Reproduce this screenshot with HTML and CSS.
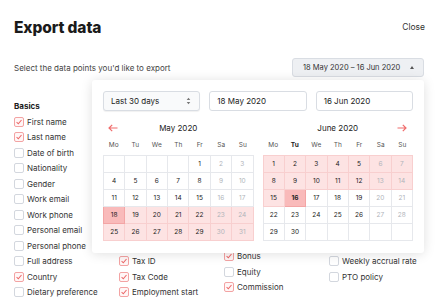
FILE: index.html
```html
<!DOCTYPE html>
<html lang="en">
<head>
    <meta charset="UTF-8">
    <meta name="viewport" content="width=device-width, initial-scale=1.0">
    <title>Export data</title>
    <link rel="stylesheet" href="styles.css">
</head>
<body>
    <div class="page-header">
        <h1 class="page-title">Export data</h1>
        <a class="close-link" href="#">Close</a>
    </div>

    <div class="toolbar">
        <p class="toolbar-hint">Select the data points you'd like to export</p>
        <div class="range-picker">
            <button class="range-btn" type="button">
                <span>18 May 2020 – 16 Jun 2020</span>
                <span class="caret-up"></span>
            </button>

            <div class="popover">
                <div class="popover-fields">
                    <div class="field field-select">
                        <span>Last 30 days</span>
                        <svg class="updown" width="5" height="8" viewBox="0 0 5 8"><path d="M2.5 0.8 L4.3 3 L0.7 3 Z M2.5 7.2 L4.3 5 L0.7 5 Z" fill="#777"/></svg>
                    </div>
                    <div class="field">18 May 2020</div>
                    <div class="field">16 Jun 2020</div>
                </div>

                <div class="months">
                    <div class="month">
                        <div class="month-head">
                            <svg class="nav-arrow nav-prev" width="10" height="8" viewBox="0 0 10 8"><path d="M9.5 4 H1 M4.2 0.8 L1 4 L4.2 7.2" fill="none" stroke="#f06c6c" stroke-width="1.2"/></svg>
                            <span>May 2020</span>
                        </div>
                        <div class="weekdays"><span>Mo</span><span>Tu</span><span>We</span><span>Th</span><span>Fr</span><span>Sa</span><span>Su</span></div>
                        <table class="days">
                            <tr><td></td><td></td><td></td><td></td><td>1</td><td class="wknd">2</td><td class="wknd">3</td></tr>
                            <tr><td>4</td><td>5</td><td>6</td><td>7</td><td>8</td><td class="wknd">9</td><td class="wknd">10</td></tr>
                            <tr><td>11</td><td>12</td><td>13</td><td>14</td><td>15</td><td class="wknd">16</td><td class="wknd">17</td></tr>
                            <tr class="in-range"><td class="edge">18</td><td>19</td><td>20</td><td>21</td><td>22</td><td class="wknd">23</td><td class="wknd">24</td></tr>
                            <tr class="in-range"><td>25</td><td>26</td><td>27</td><td>28</td><td>29</td><td class="wknd">30</td><td class="wknd">31</td></tr>
                        </table>
                    </div>

                    <div class="month">
                        <div class="month-head">
                            <span>June 2020</span>
                            <svg class="nav-arrow nav-next" width="10" height="8" viewBox="0 0 10 8"><path d="M0.5 4 H9 M5.8 0.8 L9 4 L5.8 7.2" fill="none" stroke="#f06c6c" stroke-width="1.2"/></svg>
                        </div>
                        <div class="weekdays"><span>Mo</span><span class="today">Tu</span><span>We</span><span>Th</span><span>Fr</span><span>Sa</span><span>Su</span></div>
                        <table class="days">
                            <tr class="in-range"><td>1</td><td>2</td><td>3</td><td>4</td><td>5</td><td class="wknd">6</td><td class="wknd">7</td></tr>
                            <tr class="in-range"><td>8</td><td>9</td><td>10</td><td>11</td><td>12</td><td class="wknd">13</td><td class="wknd">14</td></tr>
                            <tr><td class="pink">15</td><td class="pink edge today">16</td><td>17</td><td>18</td><td>19</td><td class="wknd">20</td><td class="wknd">21</td></tr>
                            <tr><td>22</td><td>23</td><td>24</td><td>25</td><td>26</td><td class="wknd">27</td><td class="wknd">28</td></tr>
                            <tr><td>29</td><td>30</td><td></td><td></td><td></td><td></td><td></td></tr>
                        </table>
                    </div>
                </div>
            </div>
        </div>
    </div>

    <div class="fields">
        <div class="field-group">
            <div class="group-title">Basics</div>
            <label class="check"><span class="box on"></span>First name</label>
            <label class="check"><span class="box on"></span>Last name</label>
            <label class="check"><span class="box"></span>Date of birth</label>
            <label class="check"><span class="box"></span>Nationality</label>
            <label class="check"><span class="box"></span>Gender</label>
            <label class="check"><span class="box"></span>Work email</label>
            <label class="check"><span class="box"></span>Work phone</label>
            <label class="check"><span class="box"></span>Personal email</label>
            <label class="check"><span class="box"></span>Personal phone</label>
            <label class="check"><span class="box"></span>Full address</label>
            <label class="check"><span class="box on"></span>Country</label>
            <label class="check"><span class="box"></span>Dietary preference</label>
        </div>
        <div class="field-group">
            <div class="group-title">Employment</div>
            <label class="check"><span class="box on"></span>Job title</label>
            <label class="check"><span class="box"></span>Department</label>
            <label class="check"><span class="box"></span>Manager</label>
            <label class="check"><span class="box"></span>Location</label>
            <label class="check"><span class="box"></span>Employee ID</label>
            <label class="check"><span class="box"></span>Contract type</label>
            <label class="check"><span class="box"></span>Hours</label>
            <label class="check"><span class="box"></span>Probation end</label>
            <label class="check"><span class="box"></span>Bank details</label>
            <label class="check"><span class="box on"></span>Tax ID</label>
            <label class="check"><span class="box on"></span>Tax Code</label>
            <label class="check"><span class="box on"></span>Employment start</label>
        </div>
        <div class="field-group group-shifted">
            <div class="group-title">Compensation</div>
            <label class="check"><span class="box on"></span>Salary</label>
            <label class="check"><span class="box"></span>Currency</label>
            <label class="check"><span class="box"></span>Pay frequency</label>
            <label class="check"><span class="box"></span>Pay grade</label>
            <label class="check"><span class="box"></span>Last raise</label>
            <label class="check"><span class="box"></span>Allowances</label>
            <label class="check"><span class="box"></span>Pension</label>
            <label class="check"><span class="box"></span>Benefits</label>
            <label class="check"><span class="box"></span>Overtime</label>
            <label class="check"><span class="box on"></span>Bonus</label>
            <label class="check"><span class="box"></span>Equity</label>
            <label class="check"><span class="box on"></span>Commission</label>
        </div>
        <div class="field-group">
            <div class="group-title">Time off</div>
            <label class="check"><span class="box"></span>Allowance</label>
            <label class="check"><span class="box"></span>Days taken</label>
            <label class="check"><span class="box"></span>Days remaining</label>
            <label class="check"><span class="box"></span>Carry over</label>
            <label class="check"><span class="box"></span>Sick days</label>
            <label class="check"><span class="box"></span>Parental leave</label>
            <label class="check"><span class="box"></span>Unpaid leave</label>
            <label class="check"><span class="box"></span>Public holidays</label>
            <label class="check"><span class="box"></span>Accrual start</label>
            <label class="check"><span class="box"></span>Weekly accrual rate</label>
            <label class="check"><span class="box"></span>PTO policy</label>
        </div>
    </div>
</body>
</html>
```

FILE: styles.css
```css
body {
    font-family: Inter, "Noto Sans", sans-serif;
    font-size: 8px;
    color: #333;
    background-color: #fff;
    margin: 0;
    padding: 16px 6px 0 14px;
    overflow: hidden;
}
.page-header {
    display: flex;
    justify-content: space-between;
    align-items: center;
    height: 22px;
    padding-right: 9px;
}
.page-title {
    font-size: 15.5px;
    font-weight: 800;
    color: #1b1b1b;
    margin: 0;
    letter-spacing: -0.1px;
}
.close-link {
    color: #333;
    text-decoration: none;
    font-size: 8.5px;
}
.toolbar {
    display: flex;
    justify-content: space-between;
    align-items: center;
    margin-top: 20px;
    padding-right: 10px;
}
.toolbar-hint {
    margin: 0;
    color: #444;
}
.range-picker {
    position: relative;
}
.range-btn {
    display: flex;
    align-items: center;
    justify-content: space-between;
    width: 132px;
    height: 19px;
    padding: 0 9px 0 10px;
    font-family: inherit;
    font-size: 7.5px;
    color: #333;
    white-space: nowrap;
    background-color: #eef0f3;
    border: 1px solid #d9dde3;
    border-radius: 3px;
}
.caret-up {
    width: 0;
    height: 0;
    border-left: 2.5px solid transparent;
    border-right: 2.5px solid transparent;
    border-bottom: 3px solid #555;
}
.popover {
    position: absolute;
    top: 22px;
    right: 0;
    width: 310px;
    padding: 11px 11px 12px;
    background-color: #fff;
    border-radius: 3px;
    box-shadow: 0 1px 12px rgba(0, 0, 0, 0.13);
    z-index: 2;
}
.popover-fields {
    display: flex;
    gap: 9px;
}
.field {
    flex: 1;
    display: flex;
    align-items: center;
    justify-content: space-between;
    height: 20px;
    box-sizing: border-box;
    padding: 0 8px 0 7px;
    border: 1px solid #d9dde3;
    border-radius: 3px;
    color: #222;
}
.field-select {
    background-color: #f9fafb;
    box-shadow: 0 1px 1px rgba(0, 0, 0, 0.06);
}
.months {
    display: flex;
    gap: 9px;
    margin-top: 7px;
}
.month {
    flex: 1;
}
.month-head {
    position: relative;
    height: 20px;
    display: flex;
    align-items: center;
    justify-content: center;
    color: #222;
}
.nav-arrow {
    position: absolute;
    top: 6px;
}
.nav-prev {
    left: 5px;
}
.nav-next {
    right: 6px;
}
.weekdays {
    display: grid;
    grid-template-columns: repeat(7, 1fr);
    height: 14px;
    line-height: 14px;
    margin-bottom: 3px;
    text-align: center;
    font-size: 6.5px;
    color: #555;
}
.weekdays .today {
    font-weight: 700;
    color: #222;
}
.days {
    width: 100%;
    table-layout: fixed;
    border-collapse: collapse;
}
.days td {
    height: 16px;
    padding: 0;
    text-align: center;
    font-size: 6.5px;
    color: #222;
    border: 1px solid #e6e8ec;
}
.days td.wknd {
    color: #b0b4ba;
}
.in-range td, .days td.pink {
    background-color: #fde3e3;
    border-color: #f8cfcf;
}
.days td.edge {
    background-color: #f9baba;
    border-color: #f3a5a5;
}
.days td.today {
    font-weight: 700;
}
.fields {
    display: grid;
    grid-template-columns: repeat(4, 105px);
    margin-top: 22px;
}
.field-group {
    display: flex;
    flex-direction: column;
}
.group-shifted {
    margin-top: -5px;
}
.group-title {
    height: 15px;
    line-height: 15px;
    font-weight: 700;
    color: #1b1b1b;
}
.check {
    display: flex;
    align-items: center;
    gap: 3px;
    height: 15.5px;
    color: #333;
    white-space: nowrap;
}
.box {
    width: 10px;
    height: 10px;
    box-sizing: border-box;
    border: 1px solid #d3d7de;
    border-radius: 2px;
    background-color: #fff;
    flex-shrink: 0;
}
.box.on {
    border-color: #f3a3a3;
    background: #fff6f6 url("data:image/svg+xml;utf8,<svg xmlns='http://www.w3.org/2000/svg' width='8' height='8' viewBox='0 0 8 8'><path d='M1.6 4.2 L3.3 5.8 L6.5 2' fill='none' stroke='%23ec6a6a' stroke-width='1.1'/></svg>") center / 8px 8px no-repeat;
}
```
